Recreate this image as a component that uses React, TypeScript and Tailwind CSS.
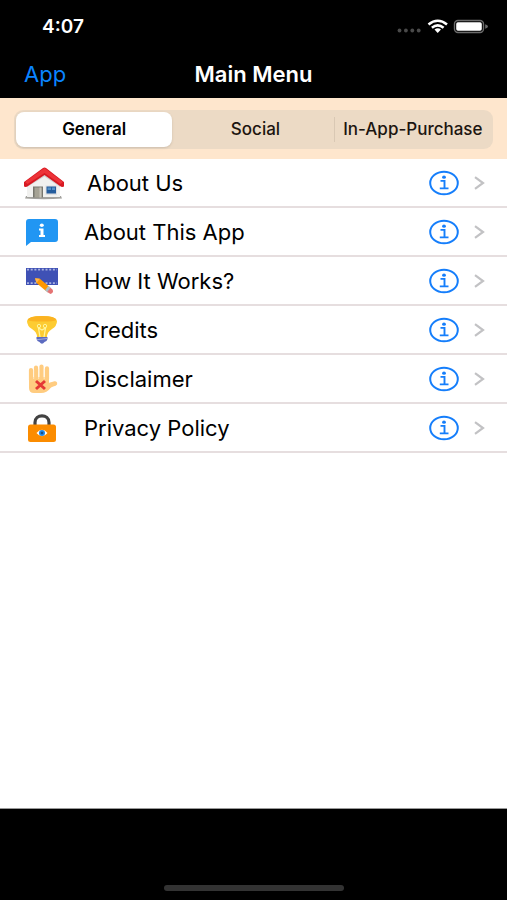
import React, { useState } from 'react';

type Tab = 'General' | 'Social' | 'In-App-Purchase';

const tabs: Tab[] = ['General', 'Social', 'In-App-Purchase'];

const items = [
  { label: 'About Us', icon: <HouseIcon />, wide: true },
  { label: 'About This App', icon: <BubbleIcon /> },
  { label: 'How It Works?', icon: <FilmIcon /> },
  { label: 'Credits', icon: <BulbIcon /> },
  { label: 'Disclaimer', icon: <HandIcon /> },
  { label: 'Privacy Policy', icon: <LockIcon /> },
];

export default function App() {
  const [tab, setTab] = useState<Tab>('General');

  return (
    <div className="flex min-h-screen flex-col bg-white font-['Inter',sans-serif] text-black">
      {/* Status bar */}
      <div className="flex h-[50px] items-center justify-between bg-black pl-[42px] pr-[19px] pt-1 text-white">
        <span className="text-[19px] font-semibold">4:07</span>
        <StatusIcons />
      </div>

      {/* Nav bar */}
      <header className="grid h-12 grid-cols-3 items-center bg-black px-6">
        <a href="#app" className="justify-self-start text-[22px] text-[#0a84ff]">App</a>
        <h1 className="justify-self-center whitespace-nowrap text-[22px] font-semibold text-white">Main Menu</h1>
      </header>

      {/* Segmented control */}
      <div className="bg-[#fee6cd] px-[14px] pb-[10px] pt-3">
        <div className="flex h-[39px] rounded-[9px] bg-[#ecdac5] p-[2px]">
          {tabs.map((name, i) => (
            <React.Fragment key={name}>
              {i > 0 && (
                <span className={`my-[5px] w-px ${tab === name || tab === tabs[i - 1] ? '' : 'bg-[#d9c8b4]'}`} />
              )}
              <button
                type="button"
                aria-pressed={tab === name}
                onClick={() => setTab(name)}
                className={`flex-1 basis-0 whitespace-nowrap rounded-lg text-[17px] first:mr-1 ${
                  tab === name ? 'bg-white font-semibold shadow-sm' : 'font-medium text-[#1c1510]'
                }`}
              >
                {name}
              </button>
            </React.Fragment>
          ))}
        </div>
      </div>

      {/* Menu */}
      <ul className="flex-1">
        {items.map((item) => (
          <li key={item.label} className="flex h-[49px] items-center border-b-2 border-[#e6dedf] pr-5 pt-px">
            <a href="#detail" className="flex flex-1 items-center text-[22px]">
              <span className={`flex justify-center ${item.wide ? 'w-[87px]' : 'w-[84px]'}`}>{item.icon}</span>
              {item.label}
            </a>
            <button type="button" aria-label={`Info: ${item.label}`} className="mr-3">
              <InfoIcon />
            </button>
            <ChevronIcon />
          </li>
        ))}
      </ul>

      {/* Home indicator */}
      <footer className="flex h-[92px] items-end justify-center border-t border-[#999] bg-black pb-[9px]">
        <div className="h-[6px] w-[180px] rounded-full bg-[#333]" />
      </footer>
    </div>
  );
}

function StatusIcons() {
  return (
    <svg width="92" height="18" viewBox="0 0 92 18" aria-hidden="true">
      <g fill="#4a4a4a">
        <circle cx="3.500" cy="12.500" r="1.900" />
        <circle cx="9.900" cy="12.500" r="1.900" />
        <circle cx="16.300" cy="12.500" r="1.900" />
        <circle cx="22.700" cy="12.500" r="1.900" />
      </g>
      <g fill="none" stroke="#fff" strokeWidth="2.600">
        <path d="M32.500 6.500Q41.700-1 51 6.500" />
        <path d="M35.900 9.700Q41.700 5 47.600 9.700" />
      </g>
      <path d="M38.500 11.400Q41.700 9.300 45 11.400L41.700 15Z" fill="#fff" />
      <rect x="58.500" y="2.500" width="29" height="12" rx="3.500" fill="none" stroke="#6b6b6b" strokeWidth="1.400" />
      <rect x="60.200" y="4.200" width="25.600" height="8.600" rx="1.700" fill="#fff" />
      <path d="M89.200 6.300Q92 7 92 8.500T89.200 10.700Z" fill="#6b6b6b" />
    </svg>
  );
}

function InfoIcon() {
  return (
    <svg width="30" height="26" viewBox="0 0 30 26" fill="none" stroke="#157efb" aria-hidden="true">
      <ellipse cx="15" cy="13" rx="13.800" ry="11.300" strokeWidth="2" />
      <path d="M11.500 10.900H15.500V18.300M10.800 18.400H19.500" strokeWidth="1.900" />
      <ellipse cx="15" cy="7.200" rx="1.900" ry="1.600" fill="#157efb" stroke="none" />
    </svg>
  );
}

function ChevronIcon() {
  return (
    <svg width="16" height="16" viewBox="0 0 16 16" fill="none" stroke="#c2c2c4" strokeWidth="2.200" aria-hidden="true">
      <path d="M4 2.200L12 8L4 13.800" />
    </svg>
  );
}

function HouseIcon() {
  return (
    <svg width="42" height="36" viewBox="0 0 42 36" aria-hidden="true">
      <path d="M3 31H38L39 33.500Q21 35 2 33.500Z" fill="#a3a29e" />
      <path d="M4 18L21.500 7L37 18V32H4Z" fill="#f1f1ef" />
      <path d="M4 20L21.500 9L37 20V22L21.500 11.500L4 22Z" fill="#d2d1d0" />
      <path d="M10 21.500H20V32.500H10Z" fill="#77766e" />
      <path d="M11.500 22.500H18.500V32.500H11.500Z" fill="#a5a294" />
      <path d="M16.500 22.500H18.500V32.500H16.500Z" fill="#c6c3b8" />
      <path d="M22.500 20.500H34V30H22.500Z" fill="#dfe0e2" />
      <path d="M23.500 21.500H33V28.500H23.500Z" fill="#245c9c" />
      <path d="M24.500 22.500H28V25H24.500ZM29 22.500H32V25H29Z" fill="#5591c6" />
      <path d="M1 17L20 3Q21.500 2 23 3L41 17V21.500Q39 22.500 37 21L21.500 10L5 21Q3 22.500 1 21.500Z" fill="#d71922" />
      <path d="M2 17L21.500 3L40 17L37.500 19L21.500 8L4.500 19Z" fill="#ed3338" />
    </svg>
  );
}

function BubbleIcon() {
  return (
    <svg width="34" height="28" viewBox="0 0 34 28" aria-hidden="true">
      <path d="M4 1H30Q33 1 33 4V21Q33 24 30 24H6L1 28V4Q1 1 4 1Z" fill="#2196f3" />
      <ellipse cx="16.800" cy="7.300" rx="2" ry="1.800" fill="#fff" />
      <path d="M14 10.500H18.500V17H20V19H14V17H15.500V12.500H14Z" fill="#fff" />
    </svg>
  );
}

function FilmIcon() {
  return (
    <svg width="34" height="28" viewBox="0 0 34 28" aria-hidden="true">
      <path d="M1 1H33V18H1Z" fill="#3f51b5" />
      <path d="M2 2.600H32M2 16.200H32" stroke="#a9b2df" strokeWidth="1.700" strokeDasharray="2 1.700" />
      <path d="M10 11.200L14.800 11.700L25 20.300L21.500 24.500L11.500 16Z" fill="#ff9800" />
      <path d="M10 11.200L14.800 11.700L11.500 16Z" fill="#ffb74d" />
      <path d="M23.300 18.900L26.200 21.100L22.700 25.500L20 23.300Z" fill="#b0bec5" />
      <path d="M25.500 20.700L27.700 22.700Q29 25.800 25.500 27L22.200 25Z" fill="#e57373" />
    </svg>
  );
}

function BulbIcon() {
  return (
    <svg width="34" height="30" viewBox="0 0 34 30" aria-hidden="true">
      <path d="M2 6Q3 1 17 1T32 6Q32 11 27 14Q22 17 22 22H12Q12 17 7 14Q2 11 2 6Z" fill="#fdcc32" />
      <path d="M2.500 5Q4 1 17 1T31.500 5Q29 6.500 17 6.500T2.500 5Z" fill="#fbb321" />
      <path d="M15 22L13.500 13L17 15L20.500 13L19 22" fill="none" stroke="#fff59d" strokeWidth="1.300" />
      <circle cx="14" cy="11" r="1.700" fill="none" stroke="#fff59d" />
      <circle cx="20" cy="11" r="1.700" fill="none" stroke="#fff59d" />
      <path d="M11.500 22H22.500V24Q22 26.500 19.500 27Q17 30.500 14.500 27Q12 26.500 11.500 24Z" fill="#5c6bc0" />
      <path d="M12 24.700L22 23.500" stroke="#9fa8da" />
    </svg>
  );
}

function HandIcon() {
  return (
    <svg width="34" height="30" viewBox="0 0 34 30" aria-hidden="true">
      <g fill="none" stroke="#ffcc80" strokeLinecap="round">
        <path d="M6 16V6M11 15V3.600M16.500 15V2.600M22 15V4.300" strokeWidth="4.200" />
        <path d="M22 22L30 19.500" strokeWidth="4.500" />
      </g>
      <path d="M4 13H24V19L31.500 18Q30 21 25.500 24Q22 29 16 29H9Q4 29 4 24Z" fill="#ffcc80" />
      <path d="M8.700 6V15M13.700 5V15M19.200 5V15" stroke="#fff0d9" strokeWidth=".7" />
      <path d="M11 17L20 25M20 17L11 25" stroke="#e53935" strokeWidth="3" />
    </svg>
  );
}

function LockIcon() {
  return (
    <svg width="30" height="28" viewBox="0 0 30 28" aria-hidden="true">
      <path d="M8 12V8.500C8 -.3 22 -.3 22 8.500V12" fill="none" stroke="#424242" strokeWidth="3.200" />
      <rect x="1" y="10.500" width="28" height="17.500" rx="2.500" fill="#fb8c00" />
      <path d="M9.500 19Q15 12.500 20.500 19Q15 25.500 9.500 19Z" fill="#fff" />
      <circle cx="15" cy="19" r="3" fill="#1e88e5" />
      <circle cx="15" cy="19" r="1.300" fill="#164d87" />
    </svg>
  );
}
